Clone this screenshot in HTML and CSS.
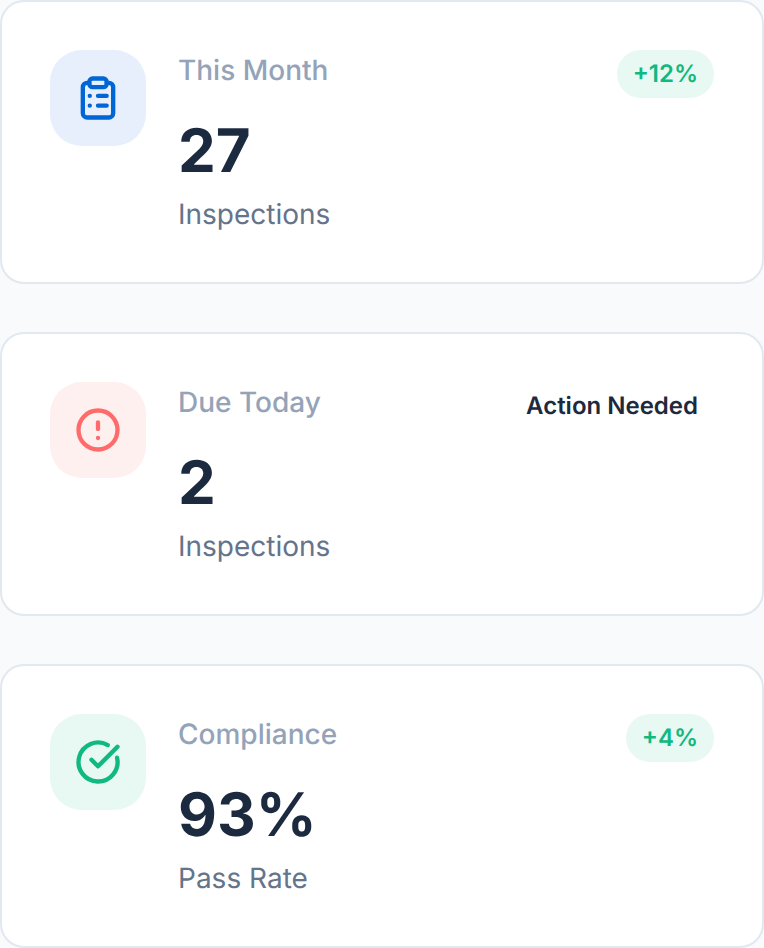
FILE: index.html
```html
<!DOCTYPE html>
<html lang="en">
<head>
<meta charset="utf-8">
<title>Inspections</title>
<link rel="stylesheet" href="styles.css">
</head>
<body>
<main class="stack">
  <section class="card">
    <div class="icon icon-blue">
      <svg viewBox="0 0 24 24" width="52" height="52" fill="none" stroke="currentColor" stroke-width="2" stroke-linecap="round" stroke-linejoin="round"><path d="M8 5H7a2 2 0 0 0-2 2v12a2 2 0 0 0 2 2h10a2 2 0 0 0 2-2V7a2 2 0 0 0-2-2h-1"/><rect x="8" y="3" width="8" height="4" rx="1.5"/><path d="M8.2 11h.01M12 11h4M8.2 15.5h.01M12 15.5h4"/></svg>
    </div>
    <div class="body">
      <div class="label">This Month</div>
      <div class="value">27</div>
      <div class="sub">Inspections</div>
    </div>
    <span class="badge badge-green">+12%</span>
  </section>
  <section class="card">
    <div class="icon icon-red">
      <svg viewBox="0 0 24 24" width="52" height="52" fill="none" stroke="currentColor" stroke-width="2" stroke-linecap="round" stroke-linejoin="round"><circle cx="12" cy="12" r="9"/><path d="M12 8.5v3M12 15.7h.01"/></svg>
    </div>
    <div class="body">
      <div class="label">Due Today</div>
      <div class="value">2</div>
      <div class="sub">Inspections</div>
    </div>
    <span class="badge badge-plain">Action Needed</span>
  </section>
  <section class="card">
    <div class="icon icon-green">
      <svg viewBox="0 0 24 24" width="52" height="52" fill="none" stroke="currentColor" stroke-width="2" stroke-linecap="round" stroke-linejoin="round"><path d="M20.8 10A9 9 0 1 1 16.5 4.2"/><path d="M9 11l3 3 9-9"/></svg>
    </div>
    <div class="body">
      <div class="label">Compliance</div>
      <div class="value">93%</div>
      <div class="sub">Pass Rate</div>
    </div>
    <span class="badge badge-green">+4%</span>
  </section>
</main>
</body>
</html>
```
FILE: styles.css
```css
* { box-sizing: border-box; }
html, body { margin: 0; padding: 0; }
body {
  background: #f8fafc;
  font-family: Inter, "Liberation Sans", sans-serif;
  color: #1e293b;
  text-rendering: geometricPrecision;
}
.stack { display: flex; flex-direction: column; gap: 48px; }
.card {
  display: flex;
  align-items: flex-start;
  gap: 32px;
  height: 284px;
  padding: 48px;
  background: #fff;
  border: 2px solid #e2e8f0;
  border-radius: 24px;
}
.icon {
  flex: none;
  width: 96px;
  height: 96px;
  border-radius: 32px;
  display: flex;
  align-items: center;
  justify-content: center;
}
.icon-blue { background: #e6effb; color: #0066d6; }
.icon-red { background: #fff0f0; color: #ff6b6b; }
.icon-green { background: #e8f8f2; color: #10b981; }
.body { flex: 1; min-width: 0; }
.label { font-size: 28px; line-height: 40px; color: #94a3b8; font-weight: 500; }
.value { font-size: 60px; line-height: 72px; font-weight: 700; margin-top: 25px; color: #1c2a40; }
.sub { font-size: 28px; line-height: 40px; color: #64748b; margin-top: 7px; }
.badge {
  flex: none;
  font-size: 24px;
  line-height: 32px;
  font-weight: 600;
  padding: 8px 16px;
  border-radius: 24px;
}
.badge-green { background: #e8f8f2; color: #10b981; }
.badge-plain { color: #1e293b; }
```
